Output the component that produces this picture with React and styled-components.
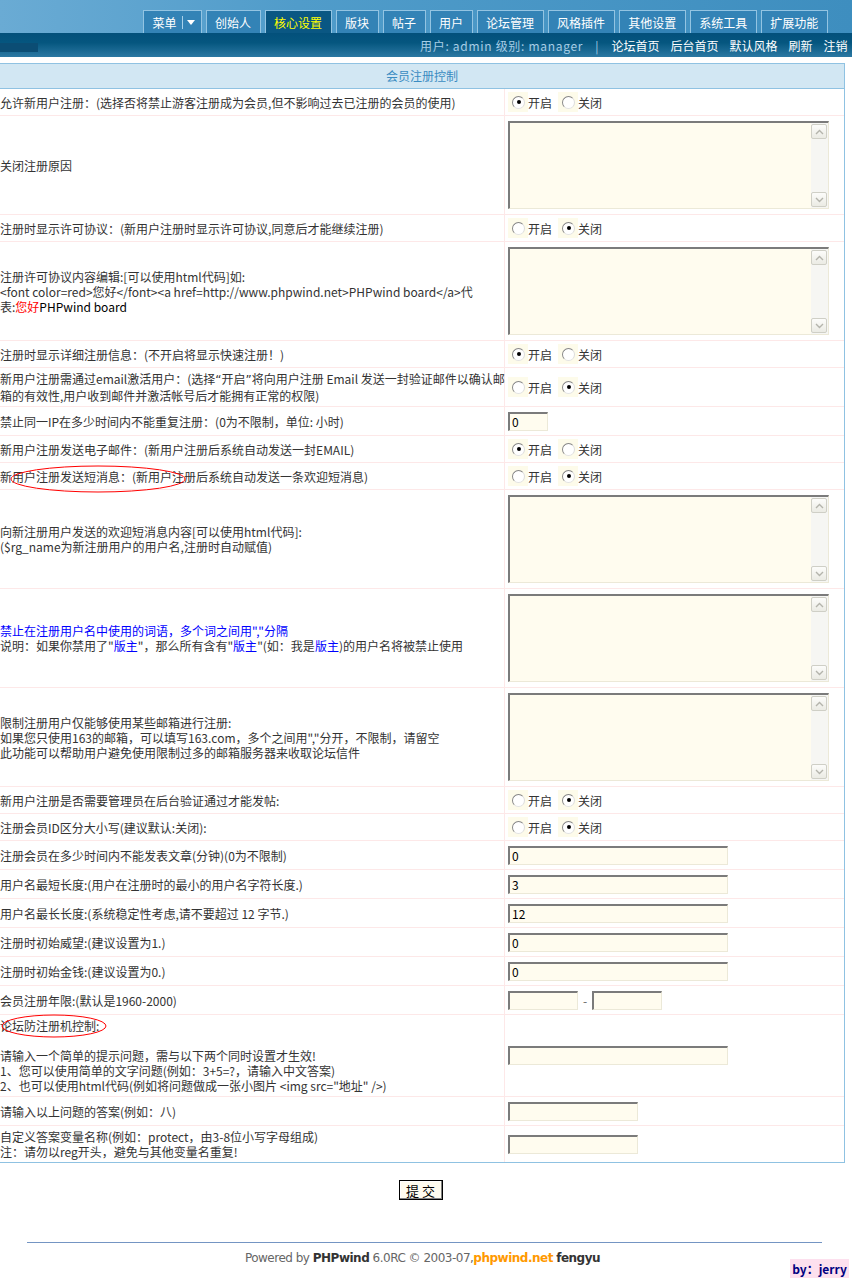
import React from 'react';
import styled, { createGlobalStyle } from 'styled-components';

const Global = createGlobalStyle`
  html, body { margin: 0; padding: 0; background: #fff; }
  body {
    font: 12px/15px "Noto Sans CJK SC", "Noto Sans", sans-serif;
    color: #333;
    width: 852px;
    overflow-x: hidden;
  }
`;

/* ---------- top navigation ---------- */
const TopBand = styled.div`
  height: 33px;
  display: flex;
  align-items: flex-end;
  gap: 4px;
  padding-left: 143px;
  background: linear-gradient(90deg, #6aabd4 0%, #509cca 35%, #3e8ebf 100%);
`;

const Tab = styled.div`
  height: 22px;
  padding: 0 8.5px;
  border: 1px solid #93c4e2;
  border-bottom: none;
  display: flex;
  align-items: center;
  white-space: nowrap;
  font-size: 12px;
  background: ${p => (p.$active ? '#0a5783' : '#3383b6')};
  color: ${p => (p.$active ? '#ffff00' : '#fff')};
`;

const MenuTab = styled(Tab)`
  padding-right: 6px;
`;

const TabSep = styled.span`
  width: 1px;
  height: 13px;
  margin: 0 4px 0 5px;
  background: #a8d1ea;
`;

const InfoBar = styled.div`
  height: 24px;
  display: flex;
  align-items: center;
  white-space: nowrap;
  overflow: hidden;
  background: linear-gradient(180deg, #03507b 0%, #05567f 40%, #2b78a3 100%);
`;

const BarNotch = styled.div`
  width: 38px;
  height: 9px;
  align-self: flex-end;
  margin-bottom: 5px;
  background: #0b4d74;
  flex-shrink: 0;
`;

const UserInfo = styled.div`
  margin-left: 382px;
  display: flex;
  align-items: center;
  flex-shrink: 0;
  color: #a6cde6;
  font-size: 12px;
`;

const Who = styled.span`
  letter-spacing: 0.7px;
`;

const Pipe = styled.span`
  margin: 0 13px 0 12px;
  color: #a6cde6;
`;

const NavLink = styled.span`
  color: #fff;
  margin-right: 11px;
  &:last-child { margin-right: 0; }
`;

/* ---------- settings panel ---------- */
const Panel = styled.div`
  width: 845px;
  box-sizing: border-box;
  margin-top: 6px;
  border: 1px solid #8fc2e2;
  border-left: none;
`;

const PanelHead = styled.div`
  height: 24px;
  line-height: 24px;
  text-align: center;
  color: #3a8cc2;
  background: #d2e7f3;
  border-bottom: 1px solid #8fc2e2;
`;

const Row = styled.div`
  display: grid;
  grid-template-columns: 505px 1fr;
  border-bottom: 1px solid #fde8e8;
  &:last-child { border-bottom: none; }
`;

const Label = styled.div`
  position: relative;
  box-sizing: border-box;
  padding: 3px 0;
  border-right: 1px solid #fde8e8;
  display: flex;
  flex-direction: column;
  justify-content: center;
`;

const Line = styled.div`
  white-space: nowrap;
  min-height: 15px;
`;

const Blue = styled.span` color: #0000ff; `;
const Red = styled.span` color: #ff0000; `;
const Dark = styled.span` color: #000; `;
const Quote = styled.span` font-family: "DejaVu Sans", sans-serif; `;

const Value = styled.div`
  padding: 3px;
  display: flex;
  align-items: center;
`;

/* radio buttons */
const Choice = styled.span`
  display: inline-flex;
  align-items: center;
  margin-right: 6px;
  color: #333;
`;

const RadioBox = styled.span`
  width: 20px;
  height: 20px;
  box-sizing: border-box;
  padding-left: 4px;
  display: flex;
  align-items: center;
  background: #fdfbea;
`;

const RadioDot = styled.span`
  width: 13px;
  height: 13px;
  box-sizing: border-box;
  border-radius: 50%;
  border: 1px solid;
  border-color: #868686 #dcdcdc #e2e2e2 #868686;
  background: #fff;
  display: flex;
  align-items: center;
  justify-content: center;
  &::after {
    content: '';
    width: 4px;
    height: 4px;
    border-radius: 50%;
    background: ${p => (p.$on ? '#000' : 'transparent')};
  }
`;

/* text boxes */
const Field = styled.input`
  box-sizing: border-box;
  width: ${p => p.$w}px;
  height: 19px;
  margin: 1.5px 0;
  padding: 0 2px;
  border-style: solid;
  border-width: 2px 1px 1px 2px;
  border-color: #7b7b7b #ece9d8 #ece9d8 #7b7b7b;
  background: #fffcef;
  color: #000;
  font: 12px "Noto Sans CJK SC", sans-serif;
  outline: none;
`;

const Dash = styled.span`
  margin: 0 5px;
  color: #666;
`;

const Memo = styled.div`
  box-sizing: border-box;
  width: 321px;
  height: 88px;
  margin: 2px 0;
  display: flex;
  border-style: solid;
  border-width: 2px 1px 1px 2px;
  border-color: #7b7b7b #ece9d8 #ece9d8 #7b7b7b;
  background: #fffcef;
`;

const MemoText = styled.textarea`
  flex: 1;
  border: none;
  background: transparent;
  resize: none;
  outline: none;
  overflow: hidden;
  padding: 2px;
  font: inherit;
`;

const ScrollTrack = styled.div`
  width: 17px;
  padding: 1px 1px 1px 0;
  box-sizing: border-box;
  display: flex;
  flex-direction: column;
  justify-content: space-between;
  background: #f6f6f3;
`;

const ScrollBtn = styled.div`
  height: 15px;
  box-sizing: border-box;
  border: 1px solid #cfcfc6;
  border-radius: 2px;
  background: linear-gradient(#fcfcfa, #ebebe4);
  display: flex;
  align-items: center;
  justify-content: center;
`;

const Chevron = ({ up }) => (
  <svg width="9" height="6" viewBox="0 0 9 6">
    <path d={up ? 'M1 5 L4.5 1.5 L8 5' : 'M1 1 L4.5 4.5 L8 1'} fill="none" stroke="#b4b4ac" strokeWidth="1.4" />
  </svg>
);

const Mark = styled.svg`
  position: absolute;
  left: ${p => p.$x}px;
  top: ${p => p.$y}px;
  overflow: visible;
  pointer-events: none;
`;

const Ellipse = ({ x, y, w, h }) => (
  <Mark $x={x} $y={y} width={w} height={h}>
    <ellipse cx={w / 2} cy={h / 2} rx={w / 2} ry={h / 2} fill="none" stroke="#ff0000" strokeWidth="1" />
  </Mark>
);

/* ---------- footer ---------- */
const SubmitRow = styled.div`
  width: 845px;
  padding-top: 17px;
  display: flex;
  justify-content: center;
`;

const Submit = styled.button`
  width: 44px;
  height: 20px;
  padding: 0;
  margin-left: -4px;
  border: 1px solid #000;
  box-shadow: inset -1px -1px 0 #808080, inset 1px 1px 0 #fff;
  background: #fffcef;
  color: #000;
  font: 13px "Noto Sans CJK SC", sans-serif;
`;

const Rule = styled.div`
  width: 795px;
  height: 1px;
  margin: 42px 0 0 27px;
  background: #7495c3;
`;

const Credits = styled.div`
  width: 845px;
  margin-top: 8px;
  text-align: center;
  font: 12px/15px "DejaVu Sans", sans-serif;
  letter-spacing: -0.5px;
  color: #666;
`;

const Brand = styled.b` color: #333; `;
const Site = styled.b` color: #ff9900; `;

const Badge = styled.div`
  position: fixed;
  right: 3px;
  bottom: 3px;
  width: 59px;
  height: 19px;
  display: flex;
  align-items: center;
  justify-content: center;
  background: #fde0ee;
  color: #000080;
  font: bold 12px "Noto Sans CJK SC", sans-serif;
`;

/* ---------- data ---------- */
const tabs = ['创始人', '核心设置', '版块', '帖子', '用户', '论坛管理', '风格插件', '其他设置', '系统工具', '扩展功能'];
const links = ['论坛首页', '后台首页', '默认风格', '刷新', '注销'];

const rows = [
  { label: ['允许新用户注册：(选择否将禁止游客注册成为会员,但不影响过去已注册的会员的使用)'], kind: 'radio', on: true },
  { label: ['关闭注册原因'], kind: 'memo' },
  { label: ['注册时显示许可协议：(新用户注册时显示许可协议,同意后才能继续注册)'], kind: 'radio', on: false },
  {
    label: [
      '注册许可协议内容编辑:[可以使用html代码]如:',
      '<font color=red>您好</font><a href=http://www.phpwind.net>PHPwind board</a>代',
      <>表:<Red>您好</Red><Dark>PHPwind board</Dark></>,
    ],
    kind: 'memo',
  },
  { label: ['注册时显示详细注册信息：(不开启将显示快速注册！)'], kind: 'radio', on: true },
  {
    label: [
      <>新用户注册需通过email激活用户：(选择<Quote>“</Quote>开启<Quote>”</Quote>将向用户注册 Email 发送一封验证邮件以确认邮</>,
      '箱的有效性,用户收到邮件并激活帐号后才能拥有正常的权限)',
    ],
    kind: 'radio', on: false,
  },
  { label: ['禁止同一IP在多少时间内不能重复注册：(0为不限制，单位: 小时)'], kind: 'field', w: 40, val: '0' },
  { label: ['新用户注册发送电子邮件：(新用户注册后系统自动发送一封EMAIL)'], kind: 'radio', on: true },
  { label: ['新用户注册发送短消息：(新用户注册后系统自动发送一条欢迎短消息)'], kind: 'radio', on: false, ring: { x: 11, y: 3, w: 174, h: 26 } },
  {
    label: ['向新注册用户发送的欢迎短消息内容[可以使用html代码]:', '($rg_name为新注册用户的用户名,注册时自动赋值)'],
    kind: 'memo',
  },
  {
    label: [
      <Blue>禁止在注册用户名中使用的词语，多个词之间用","分隔</Blue>,
      <>说明：如果你禁用了"<Blue>版主</Blue>"，那么所有含有"<Blue>版主</Blue>"(如：我是<Blue>版主</Blue>)的用户名将被禁止使用</>,
    ],
    kind: 'memo',
  },
  {
    label: [
      '限制注册用户仅能够使用某些邮箱进行注册:',
      '如果您只使用163的邮箱，可以填写163.com，多个之间用","分开，不限制，请留空',
      '此功能可以帮助用户避免使用限制过多的邮箱服务器来收取论坛信件',
    ],
    kind: 'memo',
  },
  { label: ['新用户注册是否需要管理员在后台验证通过才能发帖:'], kind: 'radio', on: false },
  { label: ['注册会员ID区分大小写(建议默认:关闭):'], kind: 'radio', on: false },
  { label: ['注册会员在多少时间内不能发表文章(分钟)(0为不限制)'], kind: 'field', w: 220, val: '0' },
  { label: ['用户名最短长度:(用户在注册时的最小的用户名字符长度.)'], kind: 'field', w: 220, val: '3' },
  { label: ['用户名最长长度:(系统稳定性考虑,请不要超过 12 字节.)'], kind: 'field', w: 220, val: '12' },
  { label: ['注册时初始威望:(建议设置为1.)'], kind: 'field', w: 220, val: '0' },
  { label: ['注册时初始金钱:(建议设置为0.)'], kind: 'field', w: 220, val: '0' },
  { label: ['会员注册年限:(默认是1960-2000)'], kind: 'years' },
  {
    label: [
      '论坛防注册机控制:',
      '',
      '请输入一个简单的提示问题，需与以下两个同时设置才生效!',
      '1、您可以使用简单的文字问题(例如：3+5=?，请输入中文答案)',
      '2、也可以使用html代码(例如将问题做成一张小图片 <img src="地址" />)',
    ],
    kind: 'field', w: 220, val: '', ring: { x: 2, y: 0, w: 104, h: 22 },
  },
  { label: ['请输入以上问题的答案(例如：八)'], kind: 'field', w: 130, val: '' },
  {
    label: ['自定义答案变量名称(例如：protect，由3-8位小写字母组成)', '注：请勿以reg开头，避免与其他变量名重复!'],
    kind: 'field', w: 130, val: '',
  },
];

const Radio = ({ on, text }) => (
  <Choice>
    <RadioBox><RadioDot $on={on} /></RadioBox>
    {text}
  </Choice>
);

const Control = ({ row }) => {
  switch (row.kind) {
    case 'radio':
      return (
        <>
          <Radio on={row.on} text="开启" />
          <Radio on={!row.on} text="关闭" />
        </>
      );
    case 'memo':
      return (
        <Memo>
          <MemoText defaultValue="" />
          <ScrollTrack>
            <ScrollBtn><Chevron up /></ScrollBtn>
            <ScrollBtn><Chevron /></ScrollBtn>
          </ScrollTrack>
        </Memo>
      );
    case 'years':
      return (
        <>
          <Field $w={70} defaultValue="" />
          <Dash>-</Dash>
          <Field $w={70} defaultValue="" />
        </>
      );
    default:
      return <Field $w={row.w} defaultValue={row.val} />;
  }
};

export default function App() {
  return (
    <>
      <Global />
      <TopBand>
        <MenuTab>
          菜单<TabSep />
          <svg width="8" height="5" viewBox="0 0 8 5"><path d="M0 0 H8 L4 5 Z" fill="#fff" /></svg>
        </MenuTab>
        {tabs.map(t => (
          <Tab key={t} $active={t === '核心设置'}>{t}</Tab>
        ))}
      </TopBand>
      <InfoBar>
        <BarNotch />
        <UserInfo>
          <Who>用户: admin 级别: manager</Who><Pipe>|</Pipe>
          {links.map(l => <NavLink key={l}>{l}</NavLink>)}
        </UserInfo>
      </InfoBar>

      <Panel>
        <PanelHead>会员注册控制</PanelHead>
        {rows.map((row, i) => (
          <Row key={i}>
            <Label>
              {row.label.map((ln, j) => <Line key={j}>{ln}</Line>)}
              {row.ring && <Ellipse {...row.ring} />}
            </Label>
            <Value><Control row={row} /></Value>
          </Row>
        ))}
      </Panel>

      <SubmitRow><Submit type="button">提 交</Submit></SubmitRow>
      <Rule />
      <Credits>
        Powered by <Brand>PHPwind</Brand> 6.0RC © 2003-07,<Site>phpwind.net</Site> <Brand>fengyu</Brand>
      </Credits>
      <Badge>by：jerry</Badge>
    </>
  );
}
